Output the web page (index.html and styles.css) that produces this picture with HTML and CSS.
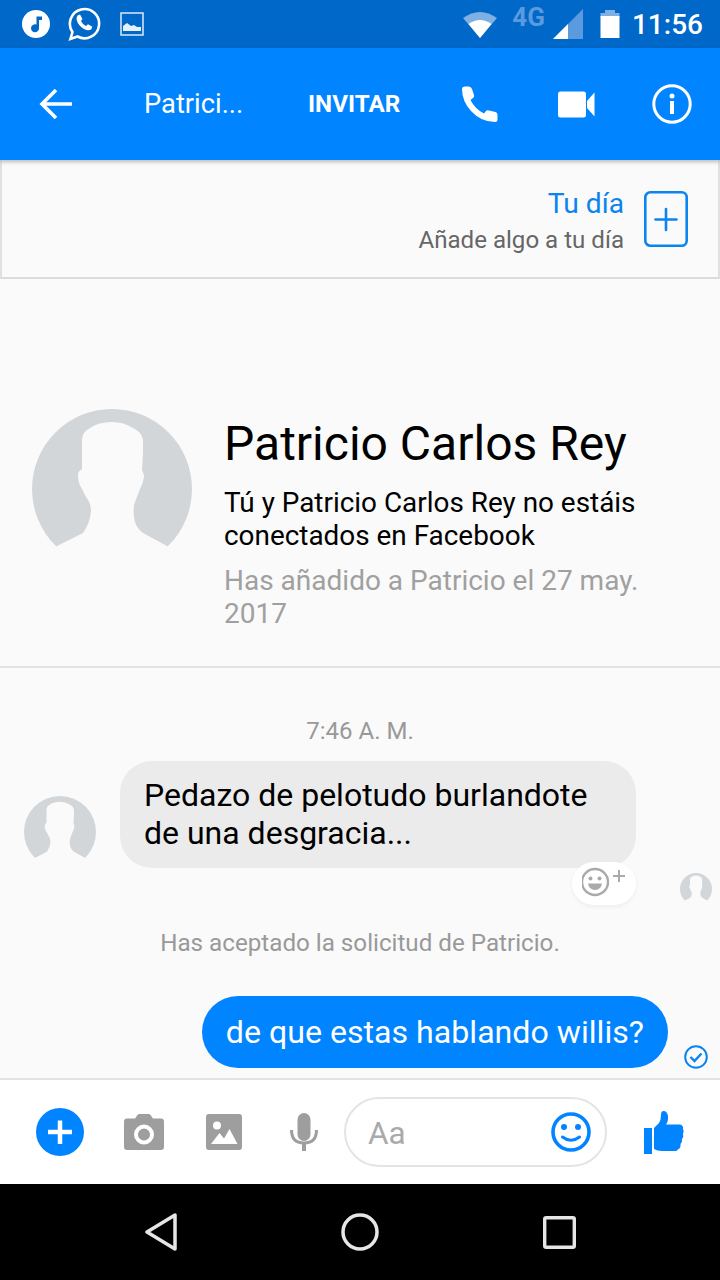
FILE: index.html
```html
<!DOCTYPE html>
<html lang="es">
<head>
  <meta charset="UTF-8" />
  <meta name="viewport" content="width=device-width, initial-scale=1.0"/>
  <title>Patricio Carlos Rey - Messenger</title>
  <link rel="stylesheet" href="styles.css">
</head>
<body>
  <svg class="defs" width="0" height="0">
    <symbol id="person" viewBox="0 0 160 160">
      <circle cx="80" cy="80" r="80" fill="#d2d6d9"/>
      <path fill="#fafafa" d="M80 13 Q66 13 58 19 Q50 23 50 31 L50 60 Q46 62 46 66 Q46 74 49 78 L54 88 Q59 94 59 102 Q58 114 51 124 L25 137 L0 160 H160 L135 137 L111 124 Q103 118 102 108 Q101 98 103 93 L108 80 Q112 72 112 66 L110 61 L111 44 L111 31 Q110 23 101 19 Q92 13 80 13 Z"/>
    </symbol>
  </svg>

  <div class="status-bar">
    <svg class="st-music" width="28" height="28" viewBox="0 0 28 28">
      <circle cx="14" cy="14" r="14" fill="#fff"/>
      <path fill="#0068c8" d="M14.500 6.500h5.500v3.600h-3v8.200a4 4 0 1 1-2.500-3.700z"/>
    </svg>
    <svg class="st-whatsapp" width="34" height="36" viewBox="0 0 34 36">
      <path fill="none" stroke="#fff" stroke-width="2.600" d="M3.400 33 L5.500 26 A14.600 14.600 0 1 1 10.500 30.500 Z"/>
      <path fill="#fff" d="M10.500 9.500 L13 8.500 L15.500 13 L14 15 Q15.500 18.500 19 20 L21 18.200 L25.300 20.800 L24.300 23.300 Q21.500 25.500 17 23 Q11.500 20 9.800 14.500 Q9.200 11.500 10.500 9.500 Z"/>
    </svg>
    <svg class="st-image" width="24" height="24" viewBox="0 0 24 24">
      <rect x="1" y="1" width="22" height="22" fill="none" stroke="#cfe3f6" stroke-width="1.600"/>
      <path fill="#e6f1fb" d="M3 19 V14 L7 11 L11 14 L14 13 L17 15 L21 15 V19 Z"/>
    </svg>
    <div class="st-spacer"></div>
    <svg class="st-wifi" width="36" height="28" viewBox="0 0 36 28">
      <path fill="#7fb0e3" d="M18 28 L1 8 Q18 -4 35 8 Z"/>
      <path fill="#fff" d="M18 28 L6.500 14 Q18 6 29.500 14 Z"/>
    </svg>
    <span class="st-net">4G</span>
    <svg class="st-signal" width="30" height="30" viewBox="0 0 30 30">
      <path fill="#5c9ae0" d="M30 0 V30 H0 Z"/>
      <path fill="#fff" d="M15 15 V30 H0 Z"/>
    </svg>
    <svg class="st-battery" width="20" height="28" viewBox="0 0 20 28">
      <path fill="#7fb0e3" d="M5 0 H15 V3 H19.500 V7 H0.500 V3 H5 Z"/>
      <rect x="0.500" y="6" width="19" height="22" fill="#fff"/>
    </svg>
    <span class="st-time">11:56</span>
  </div>

  <header class="app-bar">
    <svg class="ab-back" width="34" height="32" viewBox="0 0 34 32">
      <path fill="none" stroke="#fff" stroke-width="3.600" d="M33 16 H3 M17 2 L3 16 L17 30"/>
    </svg>
    <span class="ab-name">Patrici...</span>
    <span class="ab-invite">INVITAR</span>
    <svg class="ab-phone" width="38" height="37" viewBox="0 0 38 37">
      <path fill="#fff" d="M1 3 Q1 .5 4 .5 L8 .5 Q10 .5 11 3 L13 9 Q13.500 11 12 12 L9.500 14 Q14 23 23 27.500 L25 25 Q26 24 28 24.500 L34.500 26 Q36.500 26.500 36.500 29 L36.500 33.500 Q36.500 36 34 36 Q20 36 10 25 Q1 15 1 3 Z"/>
    </svg>
    <svg class="ab-video" width="37" height="27" viewBox="0 0 37 27">
      <rect x="0" y="0.500" width="28" height="26" rx="2.500" fill="#fff"/>
      <path fill="#fff" d="M29 10 L36.500 1.500 V25.500 L29 17 Z"/>
    </svg>
    <svg class="ab-info" width="40" height="40" viewBox="0 0 40 40">
      <circle cx="20" cy="20" r="18.200" fill="none" stroke="#fff" stroke-width="3"/>
      <circle cx="20" cy="12" r="2.500" fill="#fff"/>
      <rect x="18" y="17" width="4" height="13" fill="#fff"/>
    </svg>
  </header>

  <section class="story-strip">
    <div class="story-text">
      <div class="story-title">Tu día</div>
      <div class="story-sub">Añade algo a tu día</div>
    </div>
    <svg class="story-add" width="44" height="56" viewBox="0 0 44 56">
      <rect x="1.300" y="1.300" width="41.400" height="53.400" rx="5" fill="none" stroke="#0a84ee" stroke-width="2.600"/>
      <path fill="none" stroke="#0a84ee" stroke-width="2.600" stroke-linecap="round" d="M22 18 V39 M11.500 28.500 H32.500"/>
    </svg>
  </section>

  <section class="profile">
    <svg class="profile-pic" width="160" height="160"><use href="#person"/></svg>
    <div class="profile-info">
      <h1>Patricio Carlos Rey</h1>
      <p class="profile-note">Tú y Patricio Carlos Rey no estáis conectados en Facebook</p>
      <p class="profile-added">Has añadido a Patricio el 27 may. 2017</p>
    </div>
  </section>

  <main class="thread">
    <div class="timestamp">7:46 A. M.</div>
    <div class="msg-in">
      <svg class="msg-pic" width="72" height="72"><use href="#person"/></svg>
      <div class="bubble-in">Pedazo de pelotudo burlandote de una desgracia...
        <div class="react-pill">
          <svg width="46" height="34" viewBox="0 0 46 34">
            <circle cx="13" cy="17" r="13" fill="none" stroke="#aaa" stroke-width="2.400"/>
            <circle cx="8.500" cy="13.500" r="2" fill="#aaa"/>
            <circle cx="17.500" cy="13.500" r="2" fill="#aaa"/>
            <path fill="#aaa" d="M6 18.500 H20 Q19 25 13 25 Q7 25 6 18.500 Z"/>
            <path fill="none" stroke="#aaa" stroke-width="2" d="M37 5 V17 M31 11 H43"/>
          </svg>
        </div>
      </div>
      <svg class="seen-pic" width="32" height="32"><use href="#person"/></svg>
    </div>
    <div class="sys-note">Has aceptado la solicitud de Patricio.</div>
    <div class="msg-out">
      <div class="bubble-out">de que estas hablando willis?</div>
      <svg class="msg-check" width="24" height="24" viewBox="0 0 24 24">
        <circle cx="12" cy="12" r="10.800" fill="none" stroke="#0a84ee" stroke-width="2"/>
        <path fill="none" stroke="#0a84ee" stroke-width="2.400" d="M6.500 12 L10.500 16 L17.500 8.500"/>
      </svg>
    </div>
  </main>

  <footer class="composer">
    <svg class="cp-plus" width="48" height="48" viewBox="0 0 48 48">
      <circle cx="24" cy="24" r="24" fill="#0084ff"/>
      <path fill="none" stroke="#fff" stroke-width="4.500" d="M24 12.500 V36 M12 24 H36"/>
    </svg>
    <svg class="cp-camera" width="40" height="36" viewBox="0 0 40 36">
      <path fill="#9e9e9e" d="M3 4.500 H11 L13.500 1 Q14 0 15.500 0 H24.500 Q26 0 26.500 1 L29 4.500 H37 Q40 4.500 40 7.500 V33 Q40 36 37 36 H3 Q0 36 0 33 V7.500 Q0 4.500 3 4.500 Z"/>
      <circle cx="20" cy="20.500" r="8" fill="none" stroke="#fff" stroke-width="4"/>
    </svg>
    <svg class="cp-image" width="36" height="36" viewBox="0 0 36 36">
      <rect width="36" height="36" rx="3" fill="#9e9e9e"/>
      <circle cx="11" cy="11.500" r="4" fill="#fff"/>
      <path fill="#fff" d="M5 30 L13.500 19 L18 24.500 L23.500 15 L31.500 30 Z"/>
    </svg>
    <svg class="cp-mic" width="28" height="38" viewBox="0 0 28 38">
      <rect x="7.500" y="0" width="13" height="28" rx="6.500" fill="#9e9e9e"/>
      <path fill="none" stroke="#9e9e9e" stroke-width="3" d="M1.500 17 Q1.500 30 14 30 Q26.500 30 26.500 17"/>
      <rect x="12" y="29" width="4" height="9" fill="#9e9e9e"/>
    </svg>
    <div class="cp-input">
      <span class="cp-placeholder">Aa</span>
      <svg width="40" height="40" viewBox="0 0 40 40">
        <circle cx="20" cy="20" r="18" fill="none" stroke="#0084ff" stroke-width="3.600"/>
        <circle cx="13" cy="15" r="3" fill="#0084ff"/>
        <circle cx="27" cy="15" r="3" fill="#0084ff"/>
        <path fill="none" stroke="#0084ff" stroke-width="3" stroke-linecap="round" d="M11.500 25 Q20 31.500 28.500 25"/>
      </svg>
    </div>
    <svg class="cp-thumb" width="41" height="44" viewBox="0 0 41 44">
      <rect x="0" y="18" width="8" height="26" fill="#0084ff"/>
      <path fill="#0084ff" d="M10 18 L15 13 Q17 10 17 5 Q17 1 19.500 1 Q23 1 24 6 Q24.500 11 22 14.500 L36 14.500 Q39.500 15 39 19 Q40.500 21 39 24 Q40 27 38 29 Q38.500 32 36.500 34 Q37 38 34 39.500 Q33 41 31 41 L18 41 Q13 41 10 39 Z"/>
    </svg>
  </footer>

  <nav class="nav-bar">
    <svg width="32" height="38" viewBox="0 0 32 38">
      <path fill="none" stroke="#e6e6e6" stroke-width="3.500" stroke-linejoin="round" d="M30 2 V36 L2 19 Z"/>
    </svg>
    <svg width="38" height="38" viewBox="0 0 38 38">
      <circle cx="19" cy="19" r="17" fill="none" stroke="#e6e6e6" stroke-width="3.500"/>
    </svg>
    <svg width="33" height="33" viewBox="0 0 33 33">
      <rect x="1.700" y="1.700" width="29.600" height="29.600" rx="1.500" fill="none" stroke="#e6e6e6" stroke-width="3.400"/>
    </svg>
  </nav>
</body>
</html>
```

FILE: styles.css
```css
* {
  box-sizing: border-box;
}

html, body {
  margin: 0;
  padding: 0;
}

body {
  width: 720px;
  height: 1280px;
  overflow: hidden;
  display: flex;
  flex-direction: column;
  background-color: #fafafa;
  font-family: Roboto, sans-serif;
  color: #000;
}

svg {
  display: block;
  flex: none;
}

.defs {
  position: absolute;
}

/* status bar */
.status-bar {
  height: 48px;
  flex: none;
  display: flex;
  align-items: center;
  padding-left: 22px;
  padding-right: 17px;
  background-color: #0068c8;
  color: #fff;
}

.st-whatsapp {
  margin-left: 17px;
}

.st-image {
  margin-left: 19px;
}

.st-spacer {
  flex: 1;
}

.st-net {
  margin-left: 14px;
  margin-bottom: 14px;
  font-size: 26px;
  font-weight: 700;
  color: #5c9ae0;
}

.st-signal {
  margin-left: 8px;
}

.st-battery {
  margin-left: 17px;
}

.st-time {
  margin-left: 12px;
  font-size: 28px;
  font-weight: 500;
}

/* app bar */
.app-bar {
  height: 112px;
  flex: none;
  display: flex;
  align-items: center;
  padding-left: 39px;
  background-color: #0084ff;
  color: #fff;
  box-shadow: 0 2px 4px rgba(0, 0, 0, 0.25);
  position: relative;
}

.ab-name {
  margin-left: 71px;
  width: 164px;
  font-size: 27.3px;
}

.ab-invite {
  width: 153px;
  font-size: 24.2px;
  font-weight: 700;
}

.ab-video {
  margin-left: 59px;
}

.ab-info {
  margin-left: 57px;
}

/* tu dia */
.story-strip {
  height: 119px;
  flex: none;
  display: flex;
  align-items: center;
  justify-content: flex-end;
  padding-right: 30px;
  border-right: 2px solid #e0e0e0;
  border-left: 2px solid #e0e0e0;
  border-bottom: 2px solid #dcdcdc;
}

.story-text {
  margin-right: 20px;
  padding-top: 6px;
  text-align: right;
}

.story-title {
  font-size: 28.2px;
  line-height: 36px;
  color: #0a84ee;
}

.story-sub {
  font-size: 24.1px;
  line-height: 36px;
  color: #666;
}

/* profile */
.profile {
  height: 389px;
  flex: none;
  display: flex;
  align-items: flex-start;
  padding-top: 130px;
  padding-left: 32px;
  border-bottom: 2px solid #e2e2e2;
}

.profile-info {
  margin-top: 5px;
  margin-left: 32px;
  width: 440px;
}

.profile-info h1 {
  margin: 0;
  font-size: 48px;
  line-height: 60px;
  font-weight: 400;
}

.profile-note {
  margin: 12px 0 0;
  font-size: 27.9px;
  line-height: 33px;
}

.profile-added {
  margin: 13px 0 0;
  font-size: 28px;
  line-height: 32.5px;
  color: #a0a0a0;
}

/* conversation */
.thread {
  flex: 1;
  display: flex;
  flex-direction: column;
  border-bottom: 2px solid #e2e2e2;
}

.timestamp {
  margin-top: 49px;
  text-align: center;
  font-size: 24px;
  line-height: 28px;
  color: #999;
}

.msg-in {
  margin-top: 16px;
  display: flex;
  align-items: flex-end;
  padding-left: 24px;
}

.bubble-in {
  position: relative;
  width: 516px;
  height: 107px;
  margin-left: 24px;
  padding: 15px 24px;
  border-radius: 32px;
  background-color: #ebebeb;
  font-size: 32px;
  line-height: 38px;
}

.react-pill {
  position: absolute;
  right: 0;
  top: 101px;
  width: 64px;
  height: 43px;
  padding-top: 3px;
  padding-left: 10px;
  border-radius: 22px;
  background-color: #fff;
  box-shadow: 0 2px 4px rgba(0, 0, 0, 0.05);
}

.seen-pic {
  margin-left: 44px;
  margin-bottom: -37px;
}

.sys-note {
  margin-top: 61px;
  text-align: center;
  font-size: 24.2px;
  line-height: 28px;
  color: #999;
}

.msg-out {
  margin-top: 39px;
  display: flex;
  align-items: flex-end;
  justify-content: flex-end;
  padding-right: 12px;
}

.bubble-out {
  height: 72px;
  padding: 0 24px;
  border-radius: 36px;
  background-color: #0084ff;
  color: #fff;
  font-size: 32.15px;
  line-height: 72px;
}

.msg-check {
  margin-left: 16px;
  margin-bottom: -1px;
}

/* composer */
.composer {
  height: 104px;
  flex: none;
  display: flex;
  align-items: center;
  padding-left: 36px;
  background-color: #fff;
}

.cp-camera {
  margin-left: 40px;
}

.cp-image {
  margin-left: 42px;
}

.cp-mic {
  margin-left: 48px;
}

.cp-input {
  width: 263px;
  height: 70px;
  margin-left: 26px;
  display: flex;
  align-items: center;
  justify-content: space-between;
  padding: 0 14px 0 22px;
  border: 2px solid #e4e4e4;
  border-radius: 35px;
}

.cp-placeholder {
  padding-top: 2px;
  font-size: 31.5px;
  color: #aaa;
}

.cp-thumb {
  margin-left: 37px;
}

/* android nav */
.nav-bar {
  height: 96px;
  flex: none;
  display: flex;
  align-items: center;
  justify-content: space-between;
  padding-left: 145px;
  padding-right: 144px;
  background-color: #000;
}
```
